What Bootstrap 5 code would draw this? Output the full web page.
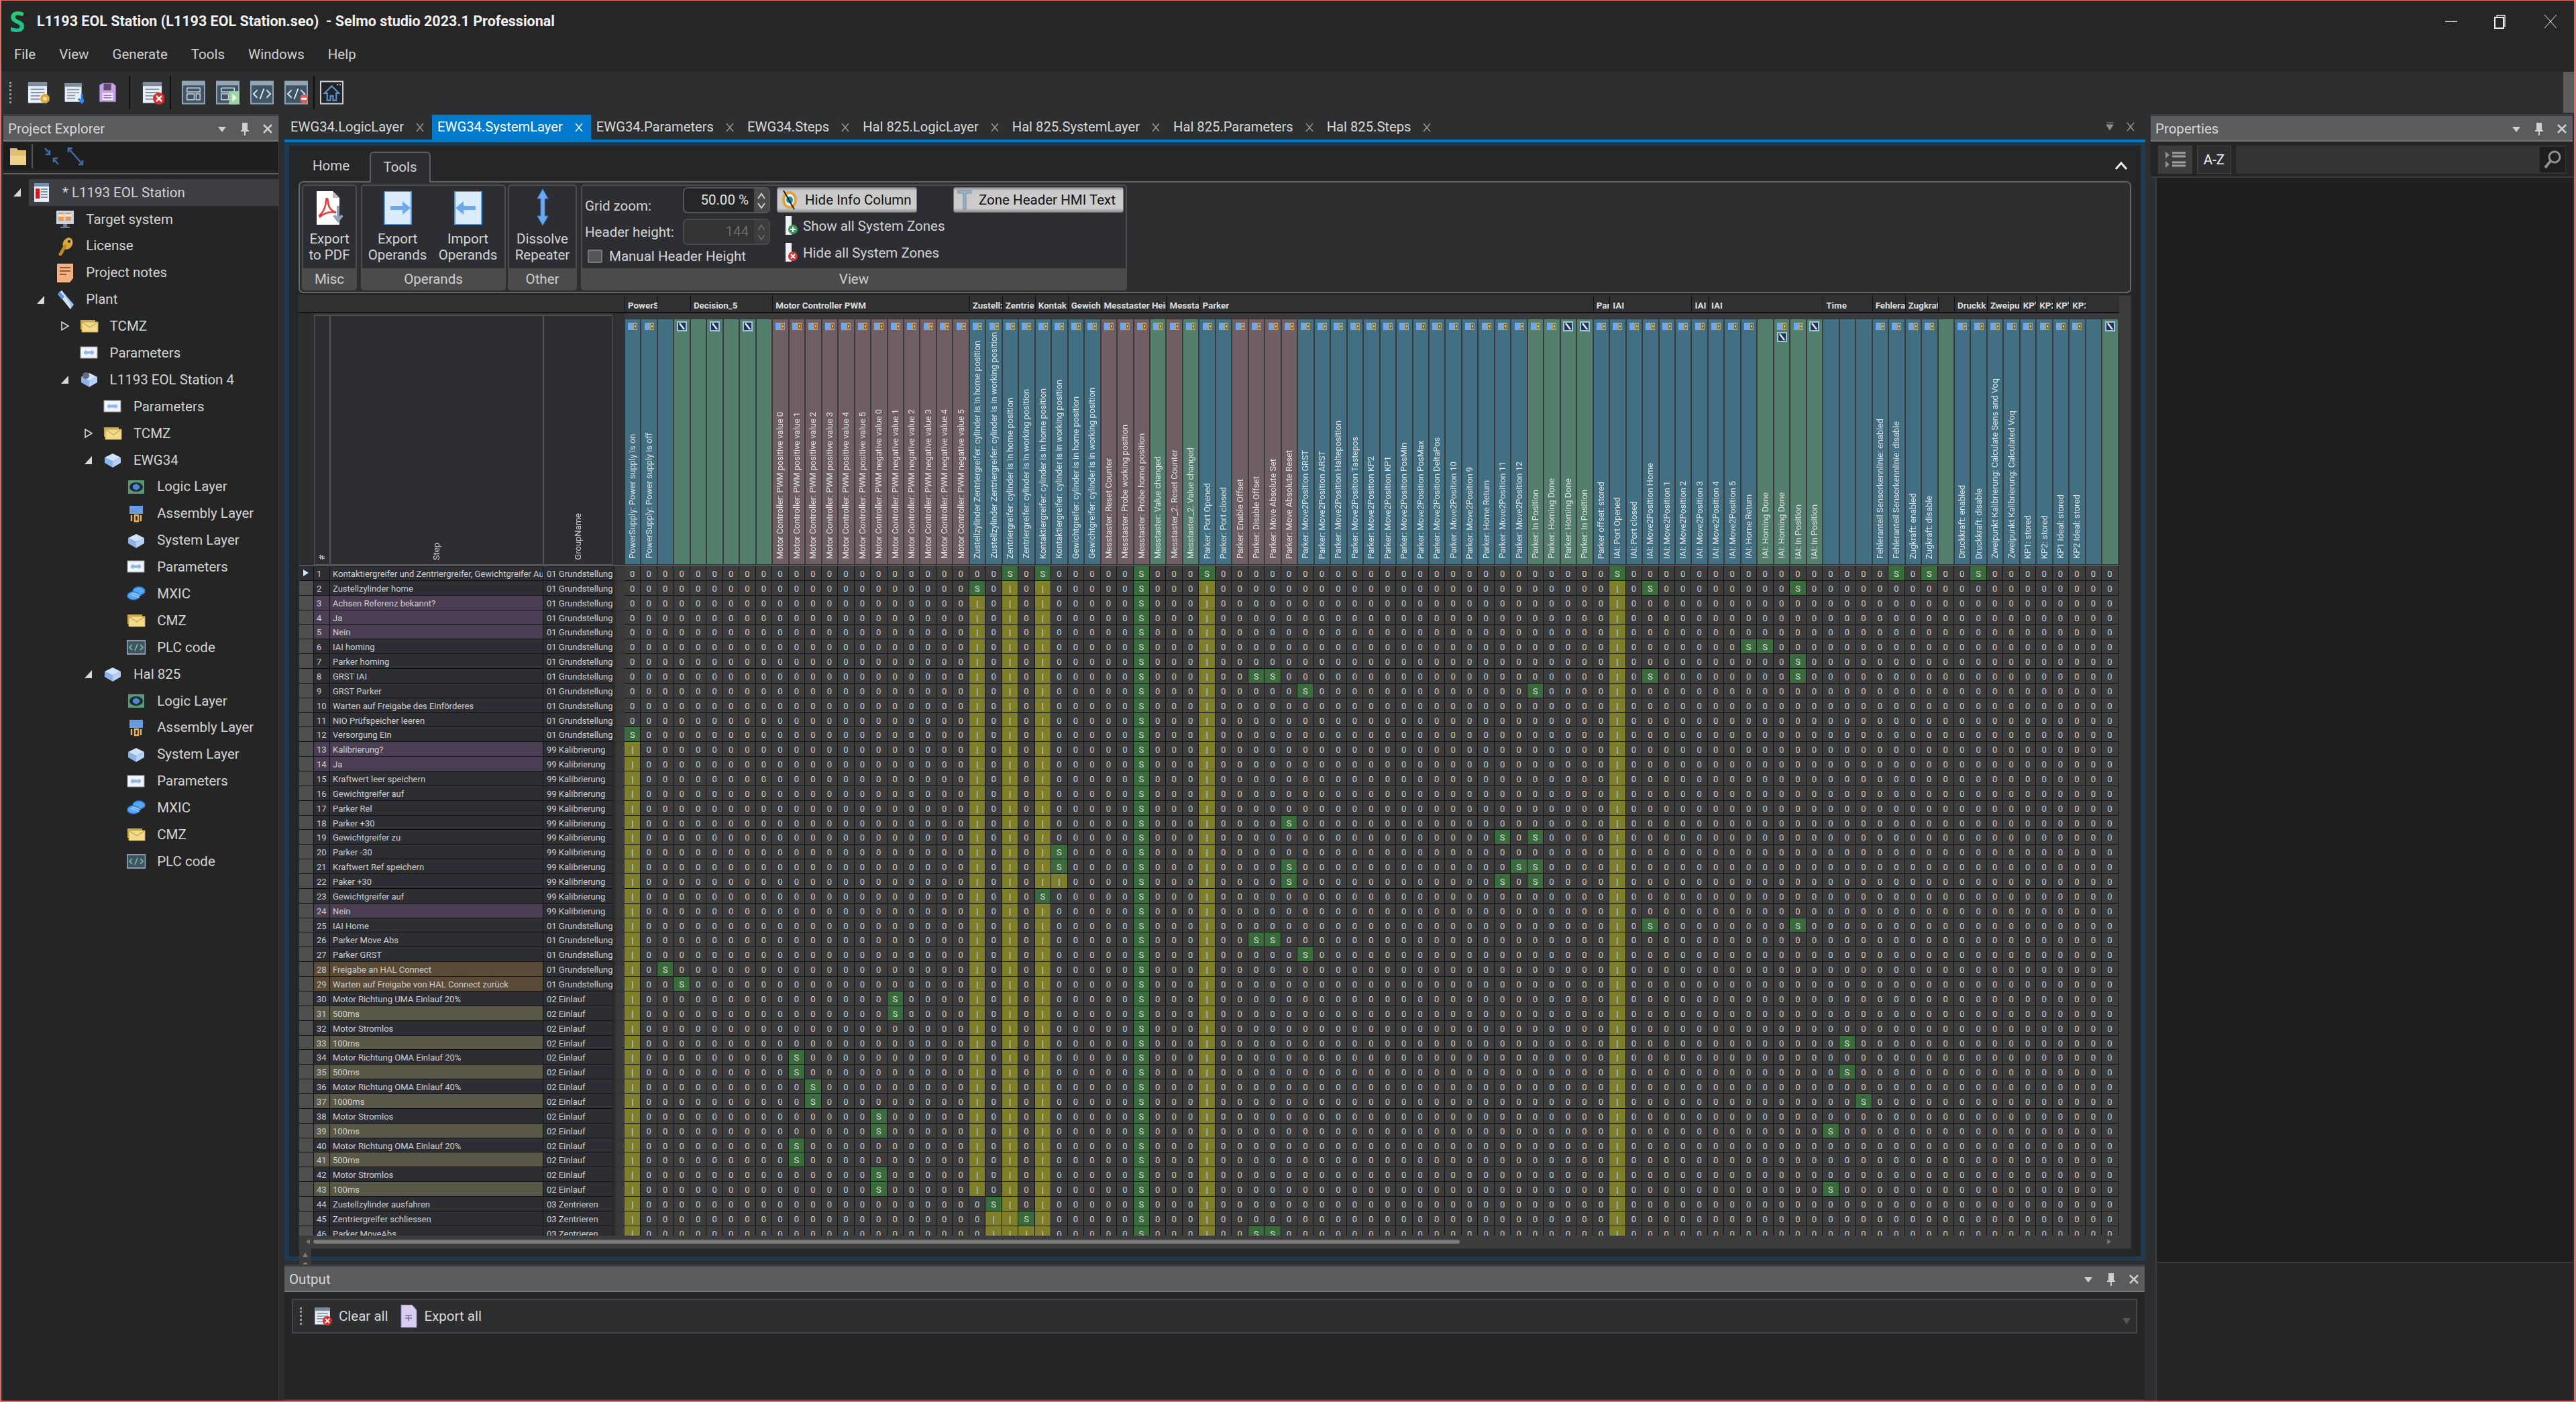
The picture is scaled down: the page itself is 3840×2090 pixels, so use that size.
<!doctype html>
<html lang="en">
<head>
<meta charset="utf-8">
<title>Selmo studio</title>
<link href="https://cdn.jsdelivr.net/npm/bootstrap@5.3.0/dist/css/bootstrap.min.css" rel="stylesheet">
<style>
html,body{margin:0;height:100%;overflow:hidden;background:#2d2e30}
.shell{width:3840px;height:2090px;border-style:solid;border-color:#e96d6d;border-width:1px 3px 2px 2px;background:#2d2e30;color:#d4d4d4;font-family:Roboto,"Noto Sans",sans-serif;font-size:20.5px;line-height:1.2;overflow:hidden}
.titlebar{height:61px;background:#262626;padding-left:12px}
.logo-s{width:41px;font-size:43px;font-weight:700;font-family:"Noto Sans",sans-serif;line-height:1;background:linear-gradient(180deg,#2fd36a,#18b89a);-webkit-background-clip:text;background-clip:text;color:transparent}
.title-txt{font-weight:700;color:#f0f0f0;font-size:21.5px;white-space:pre}
.winbtn{width:72px;height:36px;stroke:#eee;fill:none}
.menubar{height:45px;background:#262626;padding:0 0 7px 19px;gap:35px;color:#d0d0d0}
.toolbar-top{height:61px;background:#2d2e30;padding-left:12px}
.grip{width:4px;height:32px;border-left:3px dotted #999;margin-right:21px}
.tb-ico{width:35px;height:36px}
.tb-sep{width:2px;height:50px;background:#111}
.sep-soft{height:36px;background:#555}
.sc-top{width:16px;height:61px;background:#5c5c5c}
.workspace{height:1920px}
.left-col{width:422px;padding:2px 8px 0 3px}
.mid-col{width:2774px;padding-top:2px}
.right-col{width:639px;padding:2px 2px 0 8px}
.dock{background:#252525;height:100%}
.left-dock{border-right:1px solid #3c3c40}
.dock-head{height:41px;flex:none;background:#5a5b5d;border-top:3px solid #3c3d42;border-bottom:2px solid #78797b;padding:2px 8px 0 7px;color:#d8d8d8}
.head-ico{width:16px;height:22px;margin-left:18px;color:#cfcfcf}
.pe-tools{height:43px;flex:none;background:#1e1e1e;padding-left:10px}
.pe-rule{height:2px;flex:none;background:#5e5e5e;margin:4px 0 7px}
.tree-row{height:39.9px;padding-left:13px}
.tree-row.lv1{padding-left:48.3px}.tree-row.lv2{padding-left:83.6px}.tree-row.lv3{padding-left:118.9px}.tree-row.lv4{padding-left:154.2px}
.twisty{width:30px;flex:none;display:block;height:14px}
.tree-lab{height:39.9px;padding-left:0}
.tree-sel{background:#3e3f44;margin-left:-5px;padding-left:5px}
.tree-ico{width:28px;height:28px;margin-right:17px;flex:none}
.tab-strip{height:38px;background:#2d2e30;flex:none;font-size:20.2px}
.doc-tab{height:37px;margin-top:1px;padding:0 12px 0 8px;color:#d8d8d8;white-space:nowrap}
.doc-tab:first-child{margin-left:1px}
.doc-tab.on{background:#007acc;color:#fff}
.tab-x{width:12px;height:14px;margin-left:18px;stroke:#9a9a9a;stroke-width:1.4;fill:none}
.doc-tab.on .tab-x{stroke:#fff}
.tab-rt{width:14px;height:14px}
.blue-rule{height:4px;background:#007acc;flex:none}
.doc-frame{height:1668px;flex:none;border:solid #1e3a50;border-width:5px 7px 7px;background:#252628;padding-left:14px;padding-right:14px;margin-right:0}
.rib-head{height:53px;flex:none}
.rib-tab{height:46px;width:91px;margin-top:9px;margin-bottom:-2px;background:#2d2e33;border:2px solid #5d5d5d;border-bottom:none;border-radius:6px 6px 0 0;text-align:center;padding-top:9px;position:relative;z-index:1;margin-left:8px}
.rib-home{padding-left:21px;padding-top:18px;width:98px}
.chev{width:22px;height:14px;fill:none;stroke:#eee;stroke-width:3;margin:23px 4px 0 auto}
.ribbon{height:167px;flex:none;border:2px solid #666;border-radius:7px;background:#2d2e30;padding:3px;gap:6px}
.rib-grp{flex:none;background:#2d2e33;border:2px solid #4c4c50;border-radius:5px;height:158px}
.grp-body{height:125px}
.grp-lab{height:31px;background:#4b4b4b;color:#cfcfcf;text-align:center;line-height:32px}
.rib-btn{text-align:center;line-height:24px;padding-top:8px;color:#d4d4d4}
.rib-ico{height:50px;width:50px;display:block;margin:0 auto 9px}
.lbl-r{width:150px;padding-left:4px;white-space:nowrap}
.v-row{height:39px}
.spin{width:130px;height:39px;background:#252628;border:2px solid #555;border-radius:7px;color:#e0e0e0;padding:0 30px 0 0;text-align:right;line-height:35px;position:relative;font-size:20.5px}
.spin.form-control{background:#252628;color:#e0e0e0;border:2px solid #555;font-size:20.5px;line-height:35px;padding:0 30px 0 0;min-height:0}
.spin.off.form-control{background:#333;color:#6b6b6b;border-color:#4a4a4a}
.spin-bt{width:22px;height:35px;background:#4a4a4a;position:absolute;right:0;top:0;border-radius:0 5px 5px 0}
.spin-bt.dim{background:#3d3d3d}
.tog-btn{height:38px;background:linear-gradient(#8f8f8f 0,#c9c9c9 12%,#cdcdcd 85%,#8a8a8a 100%);color:#111;border:1px solid #777;border-radius:3px;padding:0 5px;font-size:20.5px;line-height:1;white-space:nowrap}
.tog-w1{width:209px}.tog-w2{width:254px}
.tog-ico{width:26px;height:32px;margin-right:10px}
.zone-ico{width:22px;height:32px;margin-right:10px}
.lnk-row{height:40px;white-space:nowrap;padding-left:12px}
.lnk-ico{width:20px;height:30px;margin-right:7px}
.chk{width:22px;height:20px;margin:0 10px 0 0;background:#555;border:2px solid #777;border-radius:2px}
.v-col1{width:290px;padding-top:2px}.v-col2{width:263px;padding-top:2px}.v-col3{padding-top:2px}
.man-row{margin-top:9px;padding-left:8px}
.grid-box{height:1422px;flex:none;margin-top:3px;background:#3c3c3c;border:1px solid #333}
.grid-main{width:2713px;flex:none;height:1416px}
.sheet{display:grid;grid-template-columns:22px 24px 318px 103px 18px repeat(91,24.473px)}
.zone-row{height:26px;background:#303133;border-bottom:2px solid #111;flex:none;font-weight:700;font-size:13.4px;color:#dedede}
.zone-row .zn{border-left:1px solid #111;padding-left:4px;overflow:hidden;white-space:nowrap;line-height:29px}
.head-row{height:377px;background:#3a3a3c;flex:none;border-bottom:2px solid #555}
.head-gut{background:#2d2e30;grid-column:span 1}
.left-head{background:#2d2e33;border:1px solid #555;margin-top:3px;position:relative;font-size:13px;color:#d4d4d4}
.vtxt{writing-mode:vertical-rl;transform:rotate(180deg);white-space:nowrap;font-size:12.7px;line-height:22px}
.left-head .vtxt{position:absolute;bottom:6px;left:50%;margin-left:-11px;font-size:13px}
.strip-h{background:#303133}
.col-h{margin:9px 1px 1px;color:#dfe3e6;overflow:hidden;align-items:center}
.c-b{background:#436f82}.c-g{background:#557f6d}.c-m{background:#6f5f64}
.ci{width:14px;height:11px;margin-top:5px;flex:none}
.cd{width:15px;height:15px;margin-top:3px;flex:none}
.col-h .vtxt{margin-top:auto;margin-bottom:8px}
.data-wrap{height:998px;overflow:hidden;flex:none}
.sheet.rw{height:21.86px;font-size:13px;line-height:23px;color:#cfcfcf}
.rw>div{overflow:hidden;white-space:nowrap}
.rg{background:#4f4f4f;border-bottom:1px solid #111;border-right:1px solid #111}
.rg.cur{background:#2d2e33;position:relative}
.rn{background:#2d2e33;border-bottom:1px solid #111;border-right:1px solid #111;padding-left:4px}
.rs{background:#2d2e33;border-bottom:1px solid #111;border-right:1px solid #111;padding-left:4px}
.rgp{background:#2d2e33;border-bottom:1px solid #111;padding-left:5px}
.rw.pur .rn,.rw.pur .rs{background:#4a3f52}
.rw.brn .rn,.rw.brn .rs{background:#5a4a38}
.rw.olv .rn,.rw.olv .rs{background:#585748}
.rstrip{background:#3a3a3a;box-shadow:inset 6px 0 5px -3px #232323}
.dc{background:#3d3d3d;border-right:1px solid #111;border-bottom:1px solid #111;text-align:center;font-size:13px}
.dc.s-c{background:#3a6b3c;color:#ddd}
.dc.i-c{background:#7f7f2a;color:#ddd}
.cur-ar{width:0;height:0;border-style:solid;border-width:5px 0 5px 8px;border-color:transparent transparent transparent #cfe4ff;position:absolute;left:6px;top:5px}
.h-scroll{height:18px;flex:none;background:#3c3c3c;padding:0 12px 0 10px}
.h-thumb{width:1709px;height:6px;background:#7a7a7a;border-radius:3px;margin-left:5px}
.v-scroll{width:18px;flex:none;background:#3c3c3c;padding-top:10px}
.v-thumb{width:6px;height:427px;background:#7a7a7a;border-radius:3px;margin:8px auto 0}
.arr-u{width:0;height:0;border-style:solid;border-width:0 4px 7px;border-color:transparent transparent #777;margin:0 auto}
.arr-d{width:0;height:0;border-style:solid;border-width:6px 4px 0;border-color:#777 transparent transparent}
.arr-d.low{margin-top:948px}
.arr-d.big{margin-top:14px;border-width:9px 6px 0;border-top-color:#555}
.arr-l{width:0;height:0;border-style:solid;border-width:4px 6px 4px 0;border-color:transparent #777 transparent transparent}
.arr-r{width:0;height:0;border-style:solid;border-width:4px 0 4px 6px;border-color:transparent transparent transparent #777}
.out-head{margin-top:5px;width:2773px}
.out-body{height:162px;background:#252525;border-bottom:2px solid #3c3c40;padding:10px 11px 0 11px;width:2773px}
.out-bar{height:52px;background:#2d2e30;border:2px solid #44444c;padding:0 8px 0 10px;color:#d8d8d8}
.out-bar .grip{height:26px;margin-right:16px}
.out-ico{width:28px;height:34px;margin-right:10px}
.prop-bar{height:54px;background:#252525;padding:6px 10px 4px 11px;gap:7px;flex:none;border:solid #3a3a3f;border-width:0 0 2px}
.prop-b1{width:51px;background:#3d3d3d}
.prop-b2{width:51px;background:#2d2e30;border:1px solid #444;color:#eee}
.prop-s{background:#333}
.prop-ic{width:38px;background:#1e1e1e;margin:2px 1px}
.prop-top{height:1618px;background:#1e1e1e;margin-left:7px;border-left:2px solid #3a3a3f;border-bottom:2px solid #3a3a3f;flex:none}
.prop-bot{flex-grow:1;background:#252525;margin-left:7px;border-left:2px solid #3a3a3f}
.wm{width:82px}.wo{width:216px}.wb{width:105px}.wt{width:103px;margin-left:-3px}.wv{width:814px}
.rib-btn.tall{padding-top:4px}
.rib-ico.tall{height:56px;margin-bottom:7px}
</style>
</head>
<body>
<svg class="d-none" xmlns="http://www.w3.org/2000/svg">
<symbol id="i-proj" viewBox="0 0 28 28"><rect x="3" y="0" width="22" height="28" fill="#e6edf5"/><rect x="3" y="0" width="22" height="5" fill="#6d8fb3"/><rect x="5" y="8" width="6" height="15" fill="#e81010"/><path d="M13 9h10M13 13h10M13 17h10M13 21h10" stroke="#7f92a6" stroke-width="2"/></symbol>
<symbol id="i-target" viewBox="0 0 28 28"><rect x="1" y="1" width="26" height="20" fill="#c8d6e4"/><rect x="4" y="4" width="8" height="12" fill="#e79a55"/><rect x="15" y="4" width="8" height="12" fill="#e79a55"/><rect x="4" y="6" width="8" height="4" fill="#f7e2c6"/><rect x="15" y="6" width="8" height="4" fill="#f7e2c6"/><rect x="11" y="21" width="6" height="4" fill="#6d7d8c"/><rect x="7" y="25" width="14" height="2" fill="#6d7d8c"/></symbol>
<symbol id="i-key" viewBox="0 0 28 28"><ellipse cx="18" cy="10" rx="7" ry="9" fill="#d9a93e" transform="rotate(25 18 10)"/><path d="M14 14L7 26" stroke="#b98a28" stroke-width="5" stroke-linecap="round"/><circle cx="20" cy="7" r="2" fill="#252525"/></symbol>
<symbol id="i-note" viewBox="0 0 28 28"><path d="M2 0h24v22l-5 6H2z" fill="#f4b183"/><path d="M6 6h16M6 11h16M6 16h10" stroke="#8a5a33" stroke-width="2"/></symbol>
<symbol id="i-plant" viewBox="0 0 28 28"><path d="M4 5l5-5 18 21-5 7z" fill="#9cc2f2"/><path d="M4 5l18 23v-7L9 0z" fill="#d2e4fb"/><path d="M3 6l6 7 4-3-7-9z" fill="#5e94dc"/></symbol>
<symbol id="i-folder" viewBox="0 0 28 28"><path d="M1 5h22v14H1z" fill="#c9a94f"/><path d="M3 8h24v15H3z" fill="#f3d98b" stroke="#c9a94f"/><path d="M3 8l12 8 12-8" fill="none" stroke="#c9a94f" stroke-width="1.4"/></symbol>
<symbol id="i-param" viewBox="0 0 28 28"><rect x="1" y="5" width="25" height="17" fill="#f1f4f8" stroke="#8f98a3"/><path d="M6 13.500h15" stroke="#8fb6ec" stroke-width="4"/><path d="M9 10v7M18 10v7" stroke="#8fb6ec" stroke-width="1.500"/></symbol>
<symbol id="i-cube" viewBox="0 0 28 28"><path d="M14 4l12 6-12 6-12-6z" fill="#cfe2fb"/><path d="M2 10v8l12 7v-9z" fill="#8ab4ea"/><path d="M26 10v8l-12 7v-9z" fill="#b7d2f5"/></symbol>
<symbol id="i-cube2" viewBox="0 0 28 28"><path d="M14 4l12 6-12 6-12-6z" fill="#cfe2fb"/><path d="M2 10v8l12 7v-9z" fill="#8ab4ea"/><path d="M26 10v8l-12 7v-9z" fill="#b7d2f5"/><circle cx="9" cy="8" r="5" fill="#666d78"/></symbol>
<symbol id="i-logic" viewBox="0 0 28 28"><rect x="2" y="4" width="24" height="20" fill="#5a9a78"/><ellipse cx="14" cy="14" rx="10" ry="7" fill="#1d2a33"/><path d="M14 9l5 3v4l-5 3-5-3v-4z" fill="#4f86d8"/></symbol>
<symbol id="i-asm" viewBox="0 0 28 28"><rect x="4" y="2" width="20" height="12" fill="#6a9ae0"/><path d="M7 16v9M12 16h5v9h-5zM21 16v9" stroke="#e6b25c" stroke-width="2.400" fill="none"/></symbol>
<symbol id="i-mxic" viewBox="0 0 28 28"><ellipse cx="18" cy="10" rx="9" ry="6" fill="#5aa7f0" stroke="#2780e0" stroke-width="1.500"/><ellipse cx="10" cy="17" rx="9" ry="6" fill="#5aa7f0" stroke="#2780e0" stroke-width="1.500"/><path d="M6 15l13 5M8 13l13 4" stroke="#dbeaff" stroke-width=".8"/></symbol>
<symbol id="i-plc" viewBox="0 0 28 28"><rect x="0.500" y="4" width="27" height="20" fill="#3f5566" stroke="#a9bccc" stroke-width="1.500"/><path d="M8 10l-4 4 4 4M20 10l4 4-4 4M16 9l-4 10" fill="none" stroke="#7fbf8f" stroke-width="1.600"/></symbol>
<symbol id="c-y" viewBox="0 0 14 11"><rect width="7" height="11" fill="#6fa8f0"/><rect x="8" y="1" width="6" height="9" fill="none" stroke="#e8b04a" stroke-width="1.400"/><rect x="10" y="4" width="2" height="3" fill="#e8d04a"/></symbol>
<symbol id="c-d" viewBox="0 0 15 15"><rect width="15" height="15" fill="#9cc3f5"/><rect x="2" y="2" width="11" height="11" fill="#26324a"/><path d="M4 3l7 9" stroke="#e8eef8" stroke-width="2.500"/></symbol>
<symbol id="x-ic" viewBox="0 0 12 14"><path d="M1 1l10 12M11 1L1 13"/></symbol>
<symbol id="d-base" viewBox="0 0 36 36"><rect x="3" y="2" width="29" height="32" fill="#e8eef5"/><rect x="3" y="2" width="29" height="6" fill="#7d8a99"/><path d="M7 13h21M7 18h21M7 23h14M7 28h14" stroke="#8595a6" stroke-width="2"/></symbol>
</svg>

<div class="shell d-flex flex-column">
  <div class="titlebar d-flex align-items-center flex-none">
    <span class="logo-s">S</span><span class="title-txt">L1193 EOL Station (L1193 EOL Station.seo)  - Selmo studio 2023.1 Professional</span>
    <div class="ms-auto d-flex pe-1">
      <svg class="winbtn"><path d="M28 18h18" stroke-width="1.500"/></svg>
      <svg class="winbtn"><rect x="30" y="12" width="13" height="16" stroke-width="2"/><path d="M33 12V9h12v16h-2" stroke-width="1.300"/></svg>
      <svg class="winbtn"><path d="M32 8l18 20M50 8L32 28" stroke-width="1"/></svg>
    </div>
  </div>
  <div class="menubar d-flex align-items-center flex-none"><span>File</span><span>View</span><span>Generate</span><span>Tools</span><span>Windows</span><span>Help</span></div>
  <div class="toolbar-top d-flex align-items-center flex-none">
    <div class="grip"></div>
    <div class="d-flex gap-0 align-items-center">
      <svg class="tb-ico"><use href="#d-base"/><circle cx="28" cy="27" r="7" fill="#dca83a"/><circle cx="28" cy="27" r="3" fill="#f3e0a8"/></svg>
      <svg class="tb-ico ms-3 ps-1"><use href="#d-base"/><path d="M28 20v11M23 27l5 6 5-6" stroke="#2f86e6" stroke-width="3" fill="none"/></svg>
      <svg class="tb-ico ms-3 ps-1" viewBox="0 0 36 36"><path d="M4 5l5-3h18l5 4v28H4z" fill="#c7a6e0" stroke="#8b6bb0"/><rect x="11" y="3" width="13" height="11" fill="#5d4a72"/><rect x="9" y="19" width="18" height="12" fill="#efe7f7"/><path d="M11 23h14M11 27h14" stroke="#8b6bb0" stroke-width="1.500"/></svg>
    </div>
    <div class="tb-sep ms-3"></div>
    <svg class="tb-ico ms-3"><use href="#d-base"/><circle cx="27" cy="27" r="9" fill="#d22f2f"/><path d="M23 23l8 8M31 23l-8 8" stroke="#fff" stroke-width="2.500"/></svg>
    <div class="tb-sep ms-2"></div>
    <svg class="tb-ico ms-3" viewBox="0 0 36 36"><rect x="1" y="1" width="34" height="34" fill="#3f5566" stroke="#93a6b6" stroke-width="2"/><rect x="1" y="1" width="34" height="6" fill="#93a6b6"/><rect x="8" y="11" width="20" height="6" fill="none" stroke="#cbd6df" stroke-width="1.500"/><rect x="8" y="20" width="11" height="9" fill="none" stroke="#cbd6df" stroke-width="1.500"/><rect x="22" y="20" width="6" height="9" fill="none" stroke="#cbd6df" stroke-width="1.500"/></svg>
    <svg class="tb-ico ms-3" viewBox="0 0 36 36"><rect x="1" y="1" width="34" height="34" fill="#3f5566" stroke="#93a6b6" stroke-width="2"/><rect x="1" y="1" width="34" height="6" fill="#93a6b6"/><rect x="8" y="11" width="20" height="6" fill="none" stroke="#cbd6df" stroke-width="1.500"/><rect x="8" y="20" width="11" height="9" fill="none" stroke="#cbd6df" stroke-width="1.500"/><rect x="20" y="16" width="16" height="20" fill="#9fd3a5"/><path d="M25 20l7 6-7 6z" fill="#f2fbf3"/></svg>
    <svg class="tb-ico ms-3" viewBox="0 0 36 36"><rect x="1" y="1" width="34" height="34" fill="#3f5566" stroke="#93a6b6" stroke-width="2"/><rect x="1" y="1" width="34" height="6" fill="#93a6b6"/><path d="M11 14l-6 6 6 6M25 14l6 6-6 6M21 12l-6 16" fill="none" stroke="#d9e4ec" stroke-width="2"/></svg>
    <svg class="tb-ico ms-3" viewBox="0 0 36 36"><rect x="1" y="1" width="34" height="34" fill="#3f5566" stroke="#93a6b6" stroke-width="2"/><rect x="1" y="1" width="34" height="6" fill="#93a6b6"/><path d="M11 14l-6 6 6 6M25 14l6 6-6 6M21 12l-6 16" fill="none" stroke="#d9e4ec" stroke-width="2"/><rect x="24" y="21" width="12" height="13" rx="5" fill="#e65a5a"/><rect x="26" y="26" width="8" height="3" fill="#fff"/></svg>
    <div class="tb-sep ms-2"></div>
    <svg class="tb-ico ms-2 ps-0" viewBox="0 0 36 36"><rect x="1" y="1" width="34" height="34" fill="#1f2226" stroke="#d5d5d5" stroke-width="2"/><path d="M18 8L7 19h4v11h5v-7h4v7h5V19h4z" fill="none" stroke="#5b93cc" stroke-width="2.200"/><path d="M26 6h2M30 6h2" stroke="#ddd" stroke-width="2"/></svg>
    <div class="sc-top ms-auto me-0"></div>
  </div>
  <div class="workspace d-flex">
    <div class="left-col flex-none">
      <div class="dock left-dock d-flex flex-column">
        <div class="dock-head d-flex align-items-center"><span>Project Explorer</span>
          <svg class="head-ico ms-auto" viewBox="0 0 16 22"><path d="M2 8h12l-6 8z" fill="currentColor"/></svg>
          <svg class="head-ico" viewBox="0 0 16 22"><path d="M4 2h8v11h2v2H9v6H7v-6H2v-2h2z" fill="currentColor"/></svg>
          <svg class="head-ico" viewBox="0 0 16 22"><path d="M2 5l12 12M14 5L2 17" stroke="currentColor" stroke-width="2.500"/></svg>
        </div>
        <div class="pe-tools d-flex align-items-center">
          <svg width="24" height="28" viewBox="0 0 24 28"><path d="M0 2h10l2 3h12v22H0z" fill="#e0bd74"/><rect y="13" width="24" height="14" fill="#f0d08a"/></svg>
          <div class="tb-sep sep-soft ms-2"></div>
          <svg class="ms-3" width="26" height="28" viewBox="0 0 26 28"><path d="M2 2l8 9M9 5v6H3M22 26l-8-9M15 23v-6h6" fill="none" stroke="#3f6ea8" stroke-width="2.400"/></svg>
          <svg class="ms-2" width="28" height="30" viewBox="0 0 28 30"><path d="M3 3l21 24M3 9V3h6M24 21v6h-6" fill="none" stroke="#3f6ea8" stroke-width="2.400"/></svg>
        </div>
        <div class="pe-rule"></div>
        <div id="tree" class="flex-grow-1"></div>
      </div>
    </div>
    <div class="mid-col flex-none d-flex flex-column">
      <div class="tab-strip d-flex align-items-center" id="tabs"></div>
      <div class="blue-rule"></div>
      <div class="doc-frame d-flex flex-column">
        <div class="rib-head d-flex">
          <div class="rib-home">Home</div>
          <div class="rib-tab">Tools</div>
          <svg class="chev" viewBox="0 0 22 14"><path d="M3 12l8-9 8 9"/></svg>
        </div>
        <div class="ribbon d-flex">
          <div class="rib-grp wm d-flex flex-column">
            <div class="grp-body rib-btn">
              <svg class="rib-ico" viewBox="0 0 50 50"><path d="M6 0h24l10 10v40H6z" fill="#fff"/><path d="M30 0v10h10z" fill="#bbb"/><path d="M10 36c6-4 10-14 10-22 0-5 3-3 3 1 0 8 4 14 12 17-8-2-17 0-24 6z" fill="none" stroke="#e23b3b" stroke-width="2.500"/><path d="M38 22v18M32 36l6 8 6-8" stroke="#8fa2b8" stroke-width="4" fill="none"/></svg>
              Export<br>to PDF
            </div>
            <div class="grp-lab mt-auto">Misc</div>
          </div>
          <div class="rib-grp wo d-flex flex-column">
            <div class="grp-body d-flex">
              <div class="rib-btn wb">
                <svg class="rib-ico" viewBox="0 0 50 50"><rect x="5" y="0" width="40" height="50" fill="#dcecff" stroke="#4e93e6" stroke-width="2"/><path d="M14 22h18v-7l12 10-12 10v-7H14z" fill="#6ea8ef"/></svg>
                Export<br>Operands
              </div>
              <div class="rib-btn wb">
                <svg class="rib-ico" viewBox="0 0 50 50"><rect x="5" y="0" width="40" height="50" fill="#dcecff" stroke="#4e93e6" stroke-width="2"/><path d="M36 22H18v-7L6 25l12 10v-7h18z" fill="#6ea8ef"/></svg>
                Import<br>Operands
              </div>
            </div>
            <div class="grp-lab mt-auto">Operands</div>
          </div>
          <div class="rib-grp wt d-flex flex-column">
            <div class="grp-body rib-btn tall">
              <svg class="rib-ico tall" viewBox="0 0 50 56"><path d="M25 1l8 14h-5v26h5l-8 14-8-14h5V15h-5z" fill="#6ea8ef" stroke="#3f7fd0"/></svg>
              Dissolve<br>Repeater
            </div>
            <div class="grp-lab mt-auto">Other</div>
          </div>
          <div class="rib-grp wv d-flex flex-column">
            <div class="grp-body d-flex">
              <div class="v-col1">
                <div class="v-row d-flex"><span class="lbl-r pt-3">Grid zoom:</span><div class="spin form-control">50.00 %<div class="spin-bt"><svg width="22" height="35" viewBox="0 0 22 35"><path d="M6 14l5-7 5 7M6 21l5 7 5-7" fill="none" stroke="#cfcfcf" stroke-width="2"/></svg></div></div></div>
                <div class="v-row d-flex mt-1 pt-1"><span class="lbl-r pt-2">Header height:</span><div class="spin off form-control">144<div class="spin-bt dim"><svg width="22" height="35" viewBox="0 0 22 35"><path d="M6 14l5-7 5 7M6 21l5 7 5-7" fill="none" stroke="#666" stroke-width="2"/></svg></div></div></div>
                <div class="man-row d-flex align-items-center"><span class="chk flex-none"></span><span>Manual Header Height</span></div>
              </div>
              <div class="v-col2">
                <button type="button" class="btn tog-btn tog-w1 d-flex align-items-center"><svg class="tog-ico" viewBox="0 0 26 32"><ellipse cx="13" cy="16" rx="11" ry="13" fill="#e8a23a"/><ellipse cx="13" cy="16" rx="7" ry="9" fill="#dff"/><circle cx="13" cy="16" r="5" fill="#1f8a9a"/><path d="M4 2l16 28" stroke="#222" stroke-width="2"/></svg>Hide Info Column</button>
                <div class="lnk-row d-flex align-items-center"><svg class="lnk-ico" viewBox="0 0 20 30"><rect x="1" y="0" width="9" height="28" fill="#eef2f6"/><circle cx="12" cy="20" r="7" fill="#3f9a5e"/><path d="M12 16v8M8 20h8" stroke="#fff" stroke-width="2"/></svg>Show all System Zones</div>
                <div class="lnk-row d-flex align-items-center"><svg class="lnk-ico" viewBox="0 0 20 30"><rect x="1" y="0" width="9" height="28" fill="#eef2f6"/><circle cx="12" cy="20" r="7" fill="#cf3a3a"/><path d="M9 17l6 6M15 17l-6 6" stroke="#fff" stroke-width="2"/></svg>Hide all System Zones</div>
              </div>
              <div class="v-col3">
                <button type="button" class="btn tog-btn tog-w2 d-flex align-items-center"><svg class="zone-ico" viewBox="0 0 22 32"><path d="M1 2h20v4h-8v24H9V6H1z" fill="#9fb4c8" stroke="#6a86a2"/></svg>Zone Header HMI Text</button>
              </div>
            </div>
            <div class="grp-lab mt-auto">View</div>
          </div>
        </div>
        <div class="grid-box d-flex flex-wrap align-content-start">
          <div class="grid-main d-flex flex-column">
            <div class="sheet zone-row" id="zones"></div>
            <div class="sheet head-row" id="heads"></div>
            <div class="data-wrap" id="rows"></div>
            <div class="h-scroll d-flex align-items-center"><div class="arr-l flex-none"></div><div class="h-thumb flex-none"></div><div class="arr-r ms-auto flex-none"></div></div>
          </div>
          <div class="v-scroll"><div class="arr-u"></div><div class="v-thumb"></div><div class="arr-d low mx-auto"></div></div>
        </div>
      </div>
      <div class="dock-head out-head d-flex align-items-center"><span>Output</span>
        <svg class="head-ico ms-auto" viewBox="0 0 16 22"><path d="M2 8h12l-6 8z" fill="currentColor"/></svg>
        <svg class="head-ico" viewBox="0 0 16 22"><path d="M4 2h8v11h2v2H9v6H7v-6H2v-2h2z" fill="currentColor"/></svg>
        <svg class="head-ico" viewBox="0 0 16 22"><path d="M2 5l12 12M14 5L2 17" stroke="currentColor" stroke-width="2.500"/></svg>
      </div>
      <div class="out-body">
        <div class="out-bar d-flex align-items-center">
          <div class="grip"></div>
          <svg class="out-ico" viewBox="0 0 36 36"><use href="#d-base"/><circle cx="27" cy="27" r="9" fill="#d22f2f"/><path d="M23 23l8 8M31 23l-8 8" stroke="#fff" stroke-width="2.500"/></svg>
          <span>Clear all</span>
          <svg class="out-ico ms-3" viewBox="0 0 28 34"><path d="M3 0h16l7 8v26H3z" fill="#d9cdf0" stroke="#9a86c4"/><path d="M9 16h10M14 16v8M9 20h10" stroke="#7f6ca8" stroke-width="1.500"/></svg>
          <span>Export all</span>
          <div class="arr-d big ms-auto"></div>
        </div>
      </div>
    </div>
    <div class="right-col flex-none d-flex flex-column">
      <div class="dock-head d-flex align-items-center flex-none"><span>Properties</span>
        <svg class="head-ico ms-auto" viewBox="0 0 16 22"><path d="M2 8h12l-6 8z" fill="currentColor"/></svg>
        <svg class="head-ico" viewBox="0 0 16 22"><path d="M4 2h8v11h2v2H9v6H7v-6H2v-2h2z" fill="currentColor"/></svg>
        <svg class="head-ico" viewBox="0 0 16 22"><path d="M2 5l12 12M14 5L2 17" stroke="currentColor" stroke-width="2.500"/></svg>
      </div>
      <div class="prop-bar d-flex align-items-stretch">
        <div class="prop-b1 d-flex align-items-center justify-content-center"><svg width="34" height="30" viewBox="0 0 34 30"><path d="M2 3l6 5-6 5zM2 17l6 5-6 5z" fill="#8f8f8f"/><path d="M12 5h20M12 10h20M12 19h20M12 24h20" stroke="#9f9f9f" stroke-width="3"/></svg></div>
        <div class="prop-b2 d-flex align-items-center justify-content-center">A-Z</div>
        <div class="prop-s flex-grow-1 d-flex justify-content-end"><div class="prop-ic d-flex align-items-center justify-content-center"><svg width="28" height="30" viewBox="0 0 28 30"><circle cx="17" cy="11" r="8" fill="none" stroke="#8f8f8f" stroke-width="3"/><path d="M11 17L3 27" stroke="#8f8f8f" stroke-width="4"/></svg></div></div>
      </div>
      <div class="prop-top"></div>
      <div class="prop-bot"></div>
    </div>
  </div>
</div>
<script>
(function(){
  var tree=[[0,'o','i-proj','* L1193 EOL Station',1],[1,'','i-target','Target system'],[1,'','i-key','License'],[1,'','i-note','Project notes'],[1,'o','i-plant','Plant'],[2,'c','i-folder','TCMZ'],[2,'','i-param','Parameters'],[2,'o','i-cube2','L1193 EOL Station 4'],[3,'','i-param','Parameters'],[3,'c','i-folder','TCMZ'],[3,'o','i-cube','EWG34']];
  var sub=[[4,'','i-logic','Logic Layer'],[4,'','i-asm','Assembly Layer'],[4,'','i-cube','System Layer'],[4,'','i-param','Parameters'],[4,'','i-mxic','MXIC'],[4,'','i-folder','CMZ'],[4,'','i-plc','PLC code']];
  tree=tree.concat(sub,[[3,'o','i-cube','Hal 825']],sub);
  document.getElementById('tree').innerHTML=tree.map(function(t){
    var tw=t[1]=='o'?'<svg class="twisty" viewBox="0 0 30 14"><path d="M13 1v12H2z" fill="#d8d8d8"/></svg>':t[1]=='c'?'<svg class="twisty" viewBox="0 0 30 14"><path d="M3 1l10 6-10 6z" fill="none" stroke="#d8d8d8" stroke-width="1.600"/></svg>':'<span class="twisty"></span>';
    return '<div class="tree-row lv'+t[0]+' d-flex align-items-center">'+tw+'<div class="tree-lab d-flex align-items-center flex-grow-1'+(t[4]?' tree-sel':'')+'"><svg class="tree-ico"><use href="#'+t[2]+'"/></svg><span>'+t[3]+'</span></div></div>';
  }).join('');
  var tabs=['EWG34.LogicLayer','EWG34.SystemLayer','EWG34.Parameters','EWG34.Steps','Hal 825.LogicLayer','Hal 825.SystemLayer','Hal 825.Parameters','Hal 825.Steps'];
  document.getElementById('tabs').innerHTML=tabs.map(function(n,i){return '<div class="doc-tab d-flex align-items-center'+(i==1?' on':'')+'"><span>'+n+'</span><svg class="tab-x"><use href="#x-ic"/></svg></div>';}).join('')+
   '<svg class="tab-rt ms-auto" viewBox="0 0 14 14"><path d="M2 1h10M2 4h10l-5 8z" fill="#8f8f8f" stroke="#8f8f8f"/></svg><svg class="tab-x me-3"><use href="#x-ic"/></svg>';
  var zones=[['PowerS',2],['',2],['Decision_5',5],['Motor Controller PWM',12],['Zustell:',2],['Zentrie',2],['Kontak',2],['Gewich',2],['Messtaster Heic',4],['Messta',2],['Parker',24],['Par',1],['IAI',5],['IAI',1],['IAI',7],['Time',3],['Fehlera',2],['Zugkrat',2],['',1],['Druckk',2],['Zweipu',2],["KP'",1],['KP2',1],["KP'",1],['KP2',1],['',2]];
  document.getElementById('zones').innerHTML='<div style="grid-column:span 5"></div>'+zones.map(function(z){return '<div class="zn" style="grid-column:span '+z[1]+'">'+z[0]+'</div>';}).join('');
  var cols=[['b','y','PowerSupply: Power supply is on'],['b','y','PowerSupply: Power supply is off'],['b','',''],['g','d',''],['g','',''],['g','d',''],['g','',''],['g','d',''],['g','','']];
  var i;
  for(i=0;i<6;i++)cols.push(['m','y','Motor Controller: PWM positive value '+i]);
  for(i=0;i<6;i++)cols.push(['m','y','Motor Controller: PWM negative value '+i]);
  ['Zustellzylinder Zentriergreifer','Zentriergreifer','Kontaktiergreifer','Gewichtgreifer'].forEach(function(n){cols.push(['b','y',n+': cylinder is in home position']);cols.push(['b','y',n+': cylinder is in working position']);});
  cols.push(['m','y','Messtaster: Reset Counter'],['m','y','Messtaster: Probe working position'],['m','y','Messtaster: Probe home position'],['g','y','Messtaster: Value changed'],['m','y','Messtaster_2: Reset Counter'],['g','y','Messtaster_2: Value changed'],['b','y','Parker: Port Opened'],['b','y','Parker: Port closed'],['m','y','Parker: Enable Offset'],['m','y','Parker: Disable Offset'],['m','y','Parker: Move Absolute Set'],['m','y','Parker: Move Absolute Reset']);
  ['GRST','ARST','Halteposition','Tastepos','KP2','KP1','PosMin','PosMax','DeltaPos','10','9'].forEach(function(n){cols.push(['b','y','Parker: Move2Position '+n]);});
  cols.push(['b','y','Parker: Home Return'],['b','y','Parker: Move2Position 11'],['b','y','Parker: Move2Position 12'],['g','y','Parker: In Position'],['g','y','Parker: Homing Done'],['g','d','Parker: Homing Done'],['g','d','Parker: In Position'],['b','y','Parker offset: stored'],['b','y','IAI: Port Opened'],['b','y','IAI: Port closed'],['b','y','IAI: Move2Position Home']);
  for(i=1;i<6;i++)cols.push(['b','y','IAI: Move2Position '+i]);
  cols.push(['b','y','IAI: Home Return'],['g','','IAI: Homing Done'],['g','yd','IAI: Homing Done'],['g','y','IAI: In Position'],['g','d','IAI: In Position'],['b','',''],['b','',''],['b','',''],['b','y','Fehleranteil Sensorkennlinie: enabled'],['b','y','Fehleranteil Sensorkennlinie: disable'],['b','y','Zugkraft: enabled'],['b','y','Zugkraft: disable'],['g','',''],['b','y','Druckkraft: enabled'],['b','y','Druckkraft: disable'],['b','y','Zweipunkt Kalibrierung: Calculate Sens and Voq'],['b','y','Zweipunkt Kalibrierung: Calculated Voq'],['b','y','KP1: stored'],['b','y','KP2: stored'],['b','y','KP1 Ideal: stored'],['b','y','KP2 Ideal: stored'],['b','',''],['g','d','']);
  function lh(t){return '<div class="left-head"><span class="vtxt">'+t+'</span></div>';}
  document.getElementById('heads').innerHTML='<div class="head-gut"></div>'+lh('#')+lh('Step')+lh('GroupName')+'<div class="strip-h"></div>'+cols.map(function(c){
    var ic='';
    if(c[1].indexOf('y')>=0)ic+='<svg class="ci"><use href="#c-y"/></svg>';
    if(c[1].indexOf('d')>=0)ic+='<svg class="cd"><use href="#c-d"/></svg>';
    return '<div class="col-h d-flex flex-column c-'+c[0]+'">'+ic+'<span class="vtxt">'+c[2]+'</span></div>';
  }).join('');
  var G1='01 Grundstellung',G9='99 Kalibrierung',G2='02 Einlauf',G3='03 Zentrieren';
  var rows=[['Kontaktiergreifer und Zentriergreifer, Gewichtgreifer Auf',G1],['Zustellzylinder home',G1],['Achsen Referenz bekannt?',G1,'pur'],['Ja',G1,'pur'],['Nein',G1,'pur'],['IAI homing',G1],['Parker homing',G1],['GRST IAI',G1],['GRST Parker',G1],['Warten auf Freigabe des Einförderes',G1],['NIO Prüfspeicher leeren',G1],['Versorgung Ein',G1],['Kalibrierung?',G9,'pur'],['Ja',G9,'pur'],['Kraftwert leer speichern',G9],['Gewichtgreifer auf',G9],['Parker Rel',G9],['Parker +30',G9],['Gewichtgreifer zu',G9],['Parker -30',G9],['Kraftwert Ref speichern',G9],['Paker +30',G9],['Gewichtgreifer auf',G9],['Nein',G9,'pur'],['IAI Home',G1],['Parker Move Abs',G1],['Parker GRST',G1],['Freigabe an HAL Connect',G1,'brn'],['Warten auf Freigabe von HAL Connect zurück',G1,'brn'],['Motor Richtung UMA Einlauf 20%',G2],['500ms',G2,'olv'],['Motor Stromlos',G2],['100ms',G2,'olv'],['Motor Richtung OMA Einlauf 20%',G2],['500ms',G2,'olv'],['Motor Richtung OMA Einlauf 40%',G2],['1000ms',G2,'olv'],['Motor Stromlos',G2],['100ms',G2,'olv'],['Motor Richtung OMA Einlauf 20%',G2],['500ms',G2,'olv'],['Motor Stromlos',G2],['100ms',G2,'olv'],['Zustellzylinder ausfahren',G3],['Zentriergreifer schliessen',G3],['Parker MoveAbs',G3]];
  var S={1:[24,26,32,36,61,78,80,83],2:[22,32,63,72],6:[69,70],7:[72],8:[39,40,63,72],9:[42,56],12:[1],18:[41],19:[54,56],20:[27],21:[27,41,55,56],22:[41,54,56],23:[26],25:[63,72],26:[39,40],27:[42],28:[3],29:[4],30:[17],31:[17],33:[75],34:[11],35:[11,75],36:[12],37:[12,76],38:[16],39:[16,74],40:[11],41:[11],42:[16],43:[16,74],44:[23],45:[25],46:[39,40]};
  var I=[[1,13,46],[22,3,43],[23,45,46],[24,2,46],[25,46,46],[26,2,22],[26,24,46],[27,22,22],[36,2,46],[61,2,46]];
  function cell(r,c){
    if((S[r]||[]).indexOf(c)>=0||c==32)return '<div class="dc s-c">S</div>';
    for(var k=0;k<I.length;k++)if(I[k][0]==c&&r>=I[k][1]&&r<=I[k][2])return '<div class="dc i-c">|</div>';
    return '<div class="dc">0</div>';
  }
  document.getElementById('rows').innerHTML=rows.map(function(x,n){
    var r=n+1,h='<div class="sheet rw '+(x[2]||'')+'"><div class="rg'+(r==1?' cur':'')+'">'+(r==1?'<span class="cur-ar"></span>':'')+'</div><div class="rn">'+r+'</div><div class="rs">'+x[0]+'</div><div class="rgp">'+x[1]+'</div><div class="rstrip"></div>';
    for(var c=1;c<=91;c++)h+=cell(r,c);
    return h+'</div>';
  }).join('');
})();
</script>
<script src="https://cdn.jsdelivr.net/npm/bootstrap@5.3.0/dist/js/bootstrap.bundle.min.js"></script>
</body>
</html>
